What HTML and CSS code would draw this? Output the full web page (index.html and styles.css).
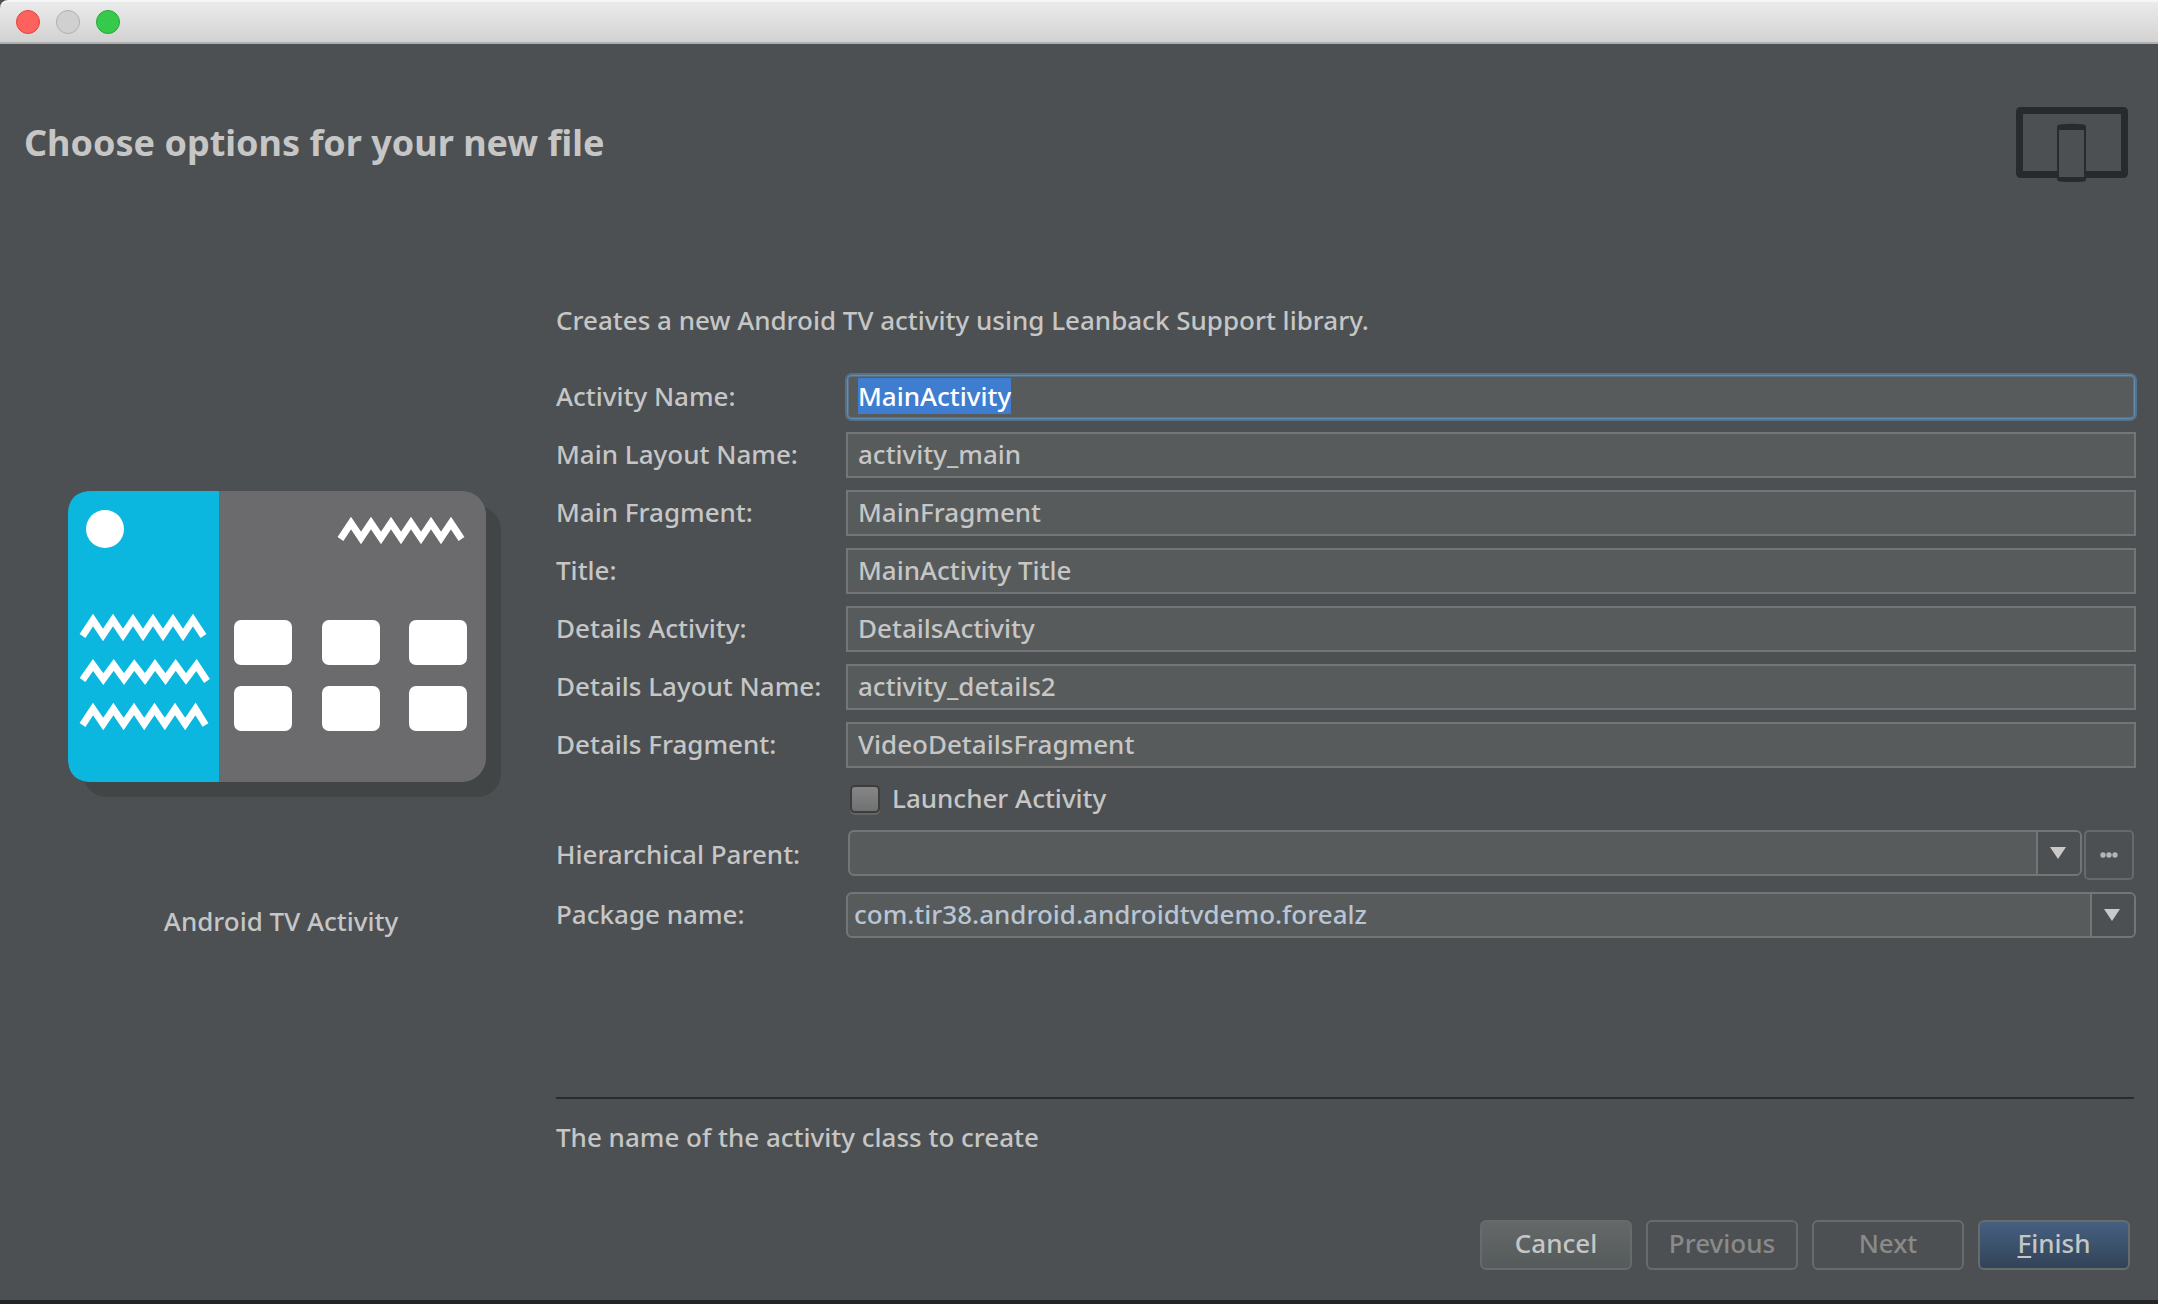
FILE: index.html
```html
<!DOCTYPE html>
<html lang="en">
<head>
<meta charset="utf-8">
<title>New Android TV Activity</title>
<link rel="stylesheet" href="styles.css">
</head>
<body>
<div class="window">
  <div class="titlebar">
    <button class="light light-close" type="button" aria-label="Close"></button>
    <button class="light light-minimize" type="button" aria-label="Minimize" disabled></button>
    <button class="light light-zoom" type="button" aria-label="Zoom"></button>
  </div>

  <header class="header">
    <h1 class="heading">Choose options for your new file</h1>
    <svg class="device-icon" viewBox="0 0 112 76" aria-hidden="true">
      <path fill="#272b2d" fill-rule="evenodd" d="M5 0H107Q112 0 112 5V66Q112 71 107 71H70V64H105V7H7V64H41V71H5Q0 71 0 66V5Q0 0 5 0Z"/>
      <path fill="#272b2d" fill-rule="evenodd" d="M44 17.500Q56 16 68 17.500Q70 18 70 20V72.500Q70 74 68 74.500Q56 75.500 44 74.500Q41 74 41 72.500V20Q41 18 44 17.500ZM43 23V70H68V23Z"/>
    </svg>
  </header>

  <main class="content">
    <figure class="preview">
      <svg class="preview-art" viewBox="0 0 434 306" aria-hidden="true">
        <rect x="15" y="15" width="418" height="291" rx="24" fill="#424545"/>
        <rect width="418" height="291" rx="24" fill="#6b6a6c"/>
        <path fill="#0bb7de" d="M24 0H151V291H24Q0 291 0 267V24Q0 0 24 0Z"/>
        <circle cx="37" cy="38" r="19" fill="#fff"/>
        <g fill="none" stroke="#fff" stroke-width="7">
          <path d="M272.500 48L283 32L293 47L303 32L313 47L323 32L333 47L343 32L353 47L363 32L373 47L383 32L393.500 48"/>
          <path d="M14.500 145L25 129L35 144L45 129L55 144L65 129L75 144L85 129L95 144L105 129L115 144L125 129L135.500 145"/>
          <path d="M14.500 189L25 174L35.300 188L45.700 174L56 188L66.300 174L77 188L87 174L97.500 188L107.700 174L118 188L128.500 174L139 190"/>
          <path d="M14.500 234L25 218L35.200 233L45.400 218L55.600 233L66 218L76.200 233L86.500 218L96.800 233L107 218L117.200 233L127.500 218L137.500 234"/>
        </g>
        <g fill="#fff">
          <rect x="166" y="129" width="58" height="45" rx="7"/>
          <rect x="254" y="129" width="58" height="45" rx="7"/>
          <rect x="341" y="129" width="58" height="45" rx="7"/>
          <rect x="166" y="195" width="58" height="45" rx="7"/>
          <rect x="254" y="195" width="58" height="45" rx="7"/>
          <rect x="341" y="195" width="58" height="45" rx="7"/>
        </g>
      </svg>
      <figcaption class="preview-name">Android TV Activity</figcaption>
    </figure>

    <form class="options" id="options">
      <p class="description">Creates a new Android TV activity using Leanback Support library.</p>
      <div class="fields">
        <label class="label" for="activity-name">Activity Name:</label>
        <input class="text-field" id="activity-name" type="text" value="MainActivity" spellcheck="false" autocomplete="off" autofocus>

        <label class="label" for="main-layout">Main Layout Name:</label>
        <input class="text-field" id="main-layout" type="text" value="activity_main" spellcheck="false">

        <label class="label" for="main-fragment">Main Fragment:</label>
        <input class="text-field" id="main-fragment" type="text" value="MainFragment" spellcheck="false">

        <label class="label" for="title">Title:</label>
        <input class="text-field" id="title" type="text" value="MainActivity Title" spellcheck="false">

        <label class="label" for="details-activity">Details Activity:</label>
        <input class="text-field" id="details-activity" type="text" value="DetailsActivity" spellcheck="false">

        <label class="label" for="details-layout">Details Layout Name:</label>
        <input class="text-field" id="details-layout" type="text" value="activity_details2" spellcheck="false">

        <label class="label" for="details-fragment">Details Fragment:</label>
        <input class="text-field" id="details-fragment" type="text" value="VideoDetailsFragment" spellcheck="false">

        <div class="check-row">
          <input class="checkbox" id="launcher" type="checkbox">
          <label class="label" for="launcher">Launcher Activity</label>
        </div>

        <label class="label" for="parent">Hierarchical Parent:</label>
        <div class="parent-row">
          <div class="combo">
            <select class="combo-select" id="parent"><option value=""></option></select>
            <span class="combo-arrow"><svg width="16" height="12" viewBox="0 0 16 12" aria-hidden="true"><path fill="#c9c9c9" d="M0 0H16L8 12Z"/></svg></span>
          </div>
          <button class="browse" type="button" aria-label="Browse">
            <svg width="18" height="6" viewBox="0 0 18 6" aria-hidden="true"><g fill="#b4b4b4"><circle cx="3" cy="3" r="2.700"/><circle cx="9" cy="3" r="2.700"/><circle cx="15" cy="3" r="2.700"/></g></svg>
          </button>
        </div>

        <label class="label" for="package">Package name:</label>
        <div class="combo">
          <select class="combo-select" id="package"><option>com.tir38.android.androidtvdemo.forealz</option></select>
          <span class="combo-arrow"><svg width="16" height="12" viewBox="0 0 16 12" aria-hidden="true"><path fill="#c9c9c9" d="M0 0H16L8 12Z"/></svg></span>
        </div>
      </div>
      <p class="hint">The name of the activity class to create</p>
    </form>
  </main>

  <footer class="footer">
    <button class="button" type="button">Cancel</button>
    <button class="button" type="button" disabled>Previous</button>
    <button class="button" type="button" disabled>Next</button>
    <button class="button button-primary" type="submit" form="options"><span><span class="mnemonic">F</span>inish</span></button>
  </footer>
</div>
<script src="script.js"></script>
</body>
</html>
```
FILE: styles.css
```css
* {
  box-sizing: border-box;
}

body {
  margin: 0;
  background: #242426;
  color: #c6c6c6;
  font: 500 26px/36px "Noto Sans", "Open Sans", sans-serif;
}

button,
input,
select {
  margin: 0;
  font: inherit;
  color: inherit;
}

.window {
  display: flex;
  flex-direction: column;
  min-height: calc(100vh - 4px);
  background: #4c5052;
}

.titlebar {
  display: flex;
  gap: 16px;
  height: 44px;
  padding: 8px 16px;
  border-top: 2px solid #f6f6f6;
  border-bottom: 2px solid #b0b0b0;
  border-top-left-radius: 8px;
  background: linear-gradient(#ebebeb, #d2d2d2);
}

.light {
  width: 24px;
  height: 24px;
  padding: 0;
  border: 1px solid;
  border-radius: 50%;
}

.light-close {
  background: #fe625c;
  border-color: #e2443f;
}

.light-minimize {
  background: #d0d0d0;
  border-color: #b0b0b0;
}

.light-zoom {
  background: #35ca4b;
  border-color: #24a936;
}

.header {
  display: flex;
  justify-content: space-between;
  align-items: flex-start;
  padding: 63px 30px 0 24px;
}

.heading {
  margin: 0;
  padding-top: 12px;
  font-size: 36px;
  line-height: 48px;
  font-weight: 700;
}

.device-icon {
  width: 112px;
  height: 76px;
}

.content {
  display: grid;
  grid-template-columns: 556px minmax(0, 1fr);
  padding: 119px 22px 0 0;
}

.preview {
  display: flex;
  flex-direction: column;
  align-items: center;
  gap: 106px;
  margin: 0;
  padding: 189px 0 0 14px;
}

.preview-name {
  padding-right: 8px;
}

.preview-art {
  width: 434px;
  height: 306px;
}

.description,
.hint {
  margin: 0;
}

.description {
  margin-bottom: 36px;
}

.fields {
  display: grid;
  grid-template-columns: 290px minmax(0, 1fr);
  gap: 12px 0;
}

.label {
  align-self: center;
  padding-bottom: 2px;
}

.text-field {
  width: 100%;
  height: 46px;
  padding: 0 10px 2px;
  border: 2px solid #757575;
  background: #575b5b;
  line-height: 32px;
}

.text-field:focus {
  border-color: #5f8db3;
  border-radius: 6px;
  outline: 2px solid #56718a;
  outline-offset: -1px;
  box-shadow: inset 0 0 0 1px #5a7182;
}

.text-field::selection {
  background: #3f7dd1;
  color: #fff;
}

.check-row {
  grid-column: 2;
  display: flex;
  align-items: center;
  gap: 12px;
  height: 38px;
  padding-left: 4px;
}

.checkbox {
  appearance: none;
  width: 30px;
  height: 28px;
  border: 2px solid #3b3d3e;
  border-radius: 5px;
  background: linear-gradient(#868686, #717171);
  box-shadow: 0 2px 0 #626566;
}

.parent-row {
  display: flex;
  align-items: flex-start;
  gap: 2px;
  padding: 0 2px;
}

.combo {
  flex: 1;
  display: grid;
  grid-template-columns: minmax(0, 1fr) 44px;
  height: 46px;
  border: 2px solid #757575;
  border-radius: 6px;
  background: #575b5b;
  overflow: hidden;
}

.combo-select {
  grid-area: 1 / 1 / 2 / 3;
  appearance: none;
  padding: 0 46px 2px 6px;
  border: 0;
  outline: 0;
  background: transparent;
  color: #b9c5d3;
}

.combo-arrow {
  grid-area: 1 / 2;
  display: flex;
  align-items: center;
  justify-content: center;
  padding-right: 2px;
  border-left: 2px solid #757575;
  background: #4c5052;
  pointer-events: none;
}

.browse {
  display: flex;
  align-items: center;
  justify-content: center;
  width: 50px;
  height: 50px;
  padding: 0;
  border: 2px solid #676a6b;
  border-radius: 5px;
  background: transparent;
}

.hint {
  margin: 159px 2px 0 0;
  padding-top: 20px;
  border-top: 2px solid #292c2d;
}

.footer {
  display: flex;
  justify-content: flex-end;
  gap: 14px;
  margin-top: auto;
  padding: 30px 28px;
}

.button {
  width: 152px;
  height: 50px;
  padding: 0 0 4px;
  border: 2px solid #686b6c;
  border-radius: 6px;
  background: linear-gradient(#646869, #555a5a);
}

.button:disabled {
  background: transparent;
  color: #8a8a8a;
}

.button-primary {
  background: linear-gradient(#466080, #324358);
}

.mnemonic {
  text-decoration: underline;
  text-decoration-thickness: 2px;
  text-underline-offset: 3px;
}
```
FILE: script.js
```js
// Start with the first field focused and its whole name selected.
const activityName = document.getElementById("activity-name");
activityName.focus();
activityName.select();
```
